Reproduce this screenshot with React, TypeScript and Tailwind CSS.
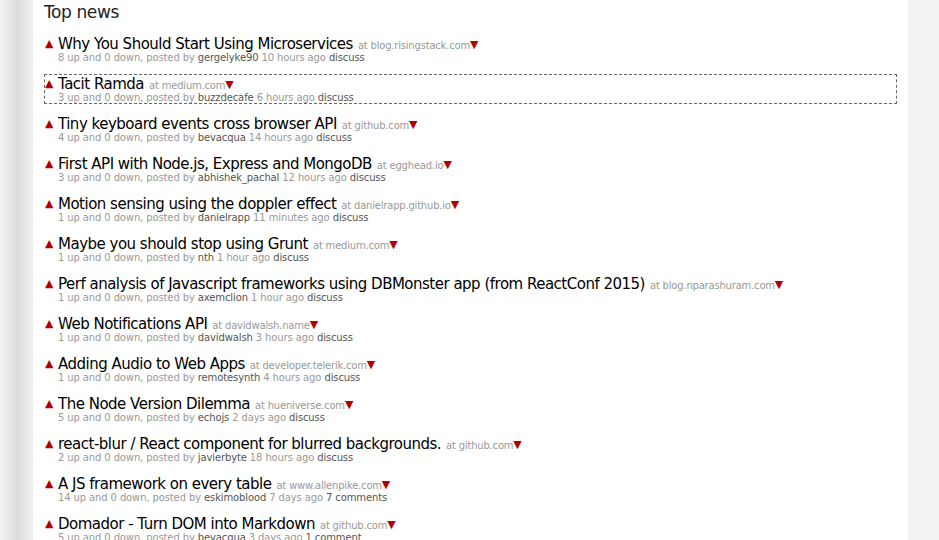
import React from 'react';

type Item = {
  title: string;
  domain: string;
  up: number;
  user: string;
  ago: string;
  comments: string;
  focused?: boolean;
};

const items: Item[] = [
  { title: 'Why You Should Start Using Microservices', domain: 'blog.risingstack.com', up: 8, user: 'gergelyke90', ago: '10 hours ago', comments: 'discuss' },
  { title: 'Tacit Ramda', domain: 'medium.com', up: 3, user: 'buzzdecafe', ago: '6 hours ago', comments: 'discuss', focused: true },
  { title: 'Tiny keyboard events cross browser API', domain: 'github.com', up: 4, user: 'bevacqua', ago: '14 hours ago', comments: 'discuss' },
  { title: 'First API with Node.js, Express and MongoDB', domain: 'egghead.io', up: 3, user: 'abhishek_pachal', ago: '12 hours ago', comments: 'discuss' },
  { title: 'Motion sensing using the doppler effect', domain: 'danielrapp.github.io', up: 1, user: 'danielrapp', ago: '11 minutes ago', comments: 'discuss' },
  { title: 'Maybe you should stop using Grunt', domain: 'medium.com', up: 1, user: 'nth', ago: '1 hour ago', comments: 'discuss' },
  { title: 'Perf analysis of Javascript frameworks using DBMonster app (from ReactConf 2015)', domain: 'blog.nparashuram.com', up: 1, user: 'axemclion', ago: '1 hour ago', comments: 'discuss' },
  { title: 'Web Notifications API', domain: 'davidwalsh.name', up: 1, user: 'davidwalsh', ago: '3 hours ago', comments: 'discuss' },
  { title: 'Adding Audio to Web Apps', domain: 'developer.telerik.com', up: 1, user: 'remotesynth', ago: '4 hours ago', comments: 'discuss' },
  { title: 'The Node Version Dilemma', domain: 'hueniverse.com', up: 5, user: 'echojs', ago: '2 days ago', comments: 'discuss' },
  { title: 'react-blur / React component for blurred backgrounds.', domain: 'github.com', up: 2, user: 'javierbyte', ago: '18 hours ago', comments: 'discuss' },
  { title: 'A JS framework on every table', domain: 'www.allenpike.com', up: 14, user: 'eskimoblood', ago: '7 days ago', comments: '7 comments' },
  { title: 'Domador - Turn DOM into Markdown', domain: 'github.com', up: 5, user: 'bevacqua', ago: '3 days ago', comments: '1 comment' },
];

function NewsRow({ item }: { item: Item }) {
  return (
    <li
      className={
        'h-[30px] mb-[10px] pl-[1px] ' +
        (item.focused ? 'outline-1 outline-dashed outline-[#666] -outline-offset-1' : '')
      }
    >
      <div className="flex items-center h-[20px] whitespace-nowrap">
        <span className="w-[13px] text-[11px] leading-[12px] text-[#b30000]">▲</span>
        <span className="text-[15px] leading-[20px] tracking-[-0.5px] text-black">{item.title}</span>
        <span className="ml-[5px] mt-[3px] text-[10px] leading-[14px] tracking-[-0.2px] text-[#999]">at {item.domain}</span>
        <span className="mt-[1px] text-[11px] leading-[14px] text-[#b30000]">▼</span>
      </div>
      <div className="-mt-[2px] pl-[13px] text-[10px] leading-[12px] tracking-[-0.12px] text-[#999] whitespace-nowrap">
        {item.up} up and 0 down, posted by <span className="text-[#555]">{item.user}</span> {item.ago}{' '}
        <span className="text-[#555]">{item.comments}</span>
      </div>
    </li>
  );
}

export default function App() {
  return (
    <div className="flex h-[540px] w-[939px] overflow-hidden bg-[#f2f2f2] font-['DejaVu_Sans',Verdana,sans-serif]">
      <div className="w-[33px] flex-shrink-0 bg-gradient-to-r from-[#f4f4f4] via-[#dcdcdc] to-[#f0f0f0]" />
      <main className="w-[875px] flex-shrink-0 bg-white pl-[11px] pr-[11px]">
        <h2 className="pt-[1px] text-[17px] leading-[22px] tracking-[-0.4px] text-[#222]">Top news</h2>
        <ul className="mt-[11px]">
          {items.map((it) => (
            <NewsRow key={it.title} item={it} />
          ))}
        </ul>
      </main>
    </div>
  );
}
